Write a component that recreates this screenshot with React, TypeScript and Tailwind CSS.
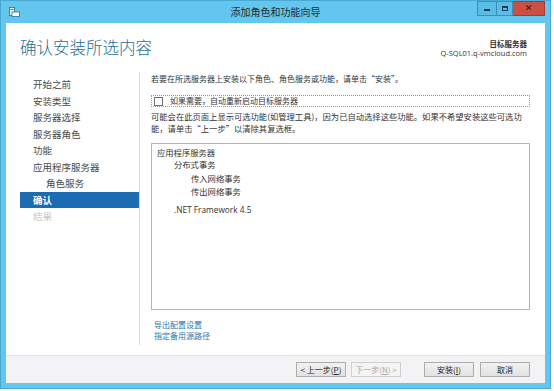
import React from 'react';

const cjk = '"Noto Sans CJK SC", "Noto Sans", sans-serif';

const navItems = [
  { label: '开始之前', indent: false, state: 'done' },
  { label: '安装类型', indent: false, state: 'done' },
  { label: '服务器选择', indent: false, state: 'done' },
  { label: '服务器角色', indent: false, state: 'done' },
  { label: '功能', indent: false, state: 'done' },
  { label: '应用程序服务器', indent: false, state: 'done' },
  { label: '角色服务', indent: true, state: 'done' },
  { label: '确认', indent: false, state: 'active' },
  { label: '结果', indent: false, state: 'disabled' },
];

const WinButton = ({ children, disabled }: { children: React.ReactNode; disabled?: boolean }) => (
  <button
    className={
      'w-[50px] h-[15px] flex items-center justify-center text-[8px] leading-none border ' +
      (disabled
        ? 'border-[#cfcfcf] bg-[#f4f4f4] text-[#a8a8a8]'
        : 'border-[#acacac] bg-gradient-to-b from-[#f2f2f2] to-[#e2e2e2] text-[#222]')
    }
  >
    {children}
  </button>
);

export default function App() {
  return (
    <div className="w-[554px] h-[391px] bg-white overflow-hidden" style={{ fontFamily: cjk }}>
      <div className="w-[551px] h-[389px] bg-[#62c6ee] border border-[#4aa9d2] flex flex-col px-[5px] pb-[5px]">
        {/* title bar */}
        <div className="h-[22px] shrink-0 grid grid-cols-[1fr_auto_1fr] items-start">
          <div className="pt-[6px] pl-[3px]">
            <svg width="11" height="10" viewBox="0 0 11 10">
              <rect x="0.5" y="0.5" width="5" height="8" fill="#e8f6fc" stroke="#2a6f90" strokeWidth="0.8" />
              <rect x="3" y="5" width="7.5" height="4.5" fill="#ffffff" stroke="#2a6f90" strokeWidth="0.8" />
              <rect x="1.5" y="2" width="3" height="0.8" fill="#2a6f90" />
            </svg>
          </div>
          <div className="pt-[4px] text-[10px] leading-[14px] text-[#2a2a2a]">添加角色和功能向导</div>
          <div className="flex justify-end">
            <div className="flex h-[15px]">
              <div className="w-[20px] border border-[#3b8fb6] bg-[#59bde6] flex items-end justify-center pb-[4px]">
                <div className="w-[6px] h-[2px] bg-[#1d3c4c]" />
              </div>
              <div className="w-[16px] border-y border-r border-[#3b8fb6] bg-[#59bde6] flex items-center justify-center">
                <div className="w-[6px] h-[5px] border-[1.5px] border-t-[2px] border-[#1d3c4c]" />
              </div>
              <div className="w-[32px] border-y border-r border-[#a8392f] bg-[#cc4f45] flex items-center justify-center">
                <span className="text-[9px] font-bold leading-none text-[#3a120c]" style={{ fontFamily: '"DejaVu Sans", sans-serif' }}>✕</span>
              </div>
            </div>
          </div>
        </div>

        {/* client area */}
        <div className="flex-1 flex flex-col bg-white">
          {/* header */}
          <div className="h-[49px] shrink-0 flex justify-between pl-[14px] pr-[18px]">
            <div className="pt-[14px] text-[16.5px] leading-[20px] font-light text-[#1f6e93]">确认安装所选内容</div>
            <div className="pt-[16px] flex flex-col items-end text-[#333]">
              <div className="text-[7.5px] leading-[9px] font-semibold">目标服务器</div>
              <div className="text-[7.5px] leading-[10px]" style={{ fontFamily: '"Open Sans", sans-serif' }}>Q-SQL01.q-vmcloud.com</div>
            </div>
          </div>

          {/* body */}
          <div className="flex-1 flex pb-[10px]">
            <div className="w-[134px] shrink-0 border-r border-[#dcdcdc] pl-[14px] pt-[4px]">
              {navItems.map((item) => (
                <div
                  key={item.label}
                  className={
                    'h-[16.5px] flex items-center text-[9.5px] ' +
                    (item.indent ? 'pl-[26px] ' : 'pl-[13px] ') +
                    (item.state === 'active'
                      ? 'bg-[#1c6cb4] text-white font-semibold'
                      : item.state === 'disabled'
                        ? 'text-[#c8c8c8]'
                        : 'text-[#4a4a4a]')
                  }
                >
                  {item.label}
                </div>
              ))}
            </div>

            <div className="flex-1 flex flex-col pl-[11px] pr-[15px] pt-[1px] text-[#333]">
              <div className="text-[8px] leading-[12px] whitespace-nowrap">
                若要在所选服务器上安装以下角色、角色服务或功能，请单击“安装”。
              </div>

              <div className="mt-[10px] h-[12px] border border-dotted border-[#9a9a9a] flex items-center pl-[2px]">
                <div className="w-[9px] h-[9px] border border-[#707070] bg-white" />
                <span className="ml-[7px] text-[8px] leading-none">如果需要，自动重新启动目标服务器</span>
              </div>

              <div className="mt-[3px] text-[8.3px] leading-[12px] whitespace-nowrap">
                可能会在此页面上显示可选功能(如管理工具)，因为已自动选择这些功能。如果不希望安装这些可选功
                <br />
                能，请单击“上一步”以清除其复选框。
              </div>

              <div className="mt-[9px] h-[167px] border border-[#b4b4b4] pl-[5px] pt-[2px] text-[8.3px] leading-[13px]">
                <div>应用程序服务器</div>
                <div className="pl-[17px] mt-[-1px]">分布式事务</div>
                <div className="pl-[34px] mt-[1px]">传入网络事务</div>
                <div className="pl-[34px]">传出网络事务</div>
                <div className="pl-[17px] mt-[5px]" style={{ fontFamily: '"Open Sans", sans-serif' }}>.NET Framework 4.5</div>
              </div>

              <div className="mt-[9px] pl-[3px] text-[8px] leading-[11px] text-[#2c78ad]">
                <div>导出配置设置</div>
                <div>指定备用源路径</div>
              </div>
            </div>
          </div>

          {/* footer */}
          <div className="h-[28px] shrink-0 bg-[#f3f2f5] border-t border-[#e2e2e2] flex items-start justify-end pt-[6px] pr-[15px]">
            <div className="flex gap-[5px]">
              <WinButton>&lt; 上一步(<span className="underline">P</span>)</WinButton>
              <WinButton disabled>下一步(<span className="underline">N</span>) &gt;</WinButton>
            </div>
            <div className="flex gap-[6px] ml-[23px]">
              <WinButton>安装(<span className="underline">I</span>)</WinButton>
              <WinButton>取消</WinButton>
            </div>
          </div>
        </div>
      </div>
    </div>
  );
}
